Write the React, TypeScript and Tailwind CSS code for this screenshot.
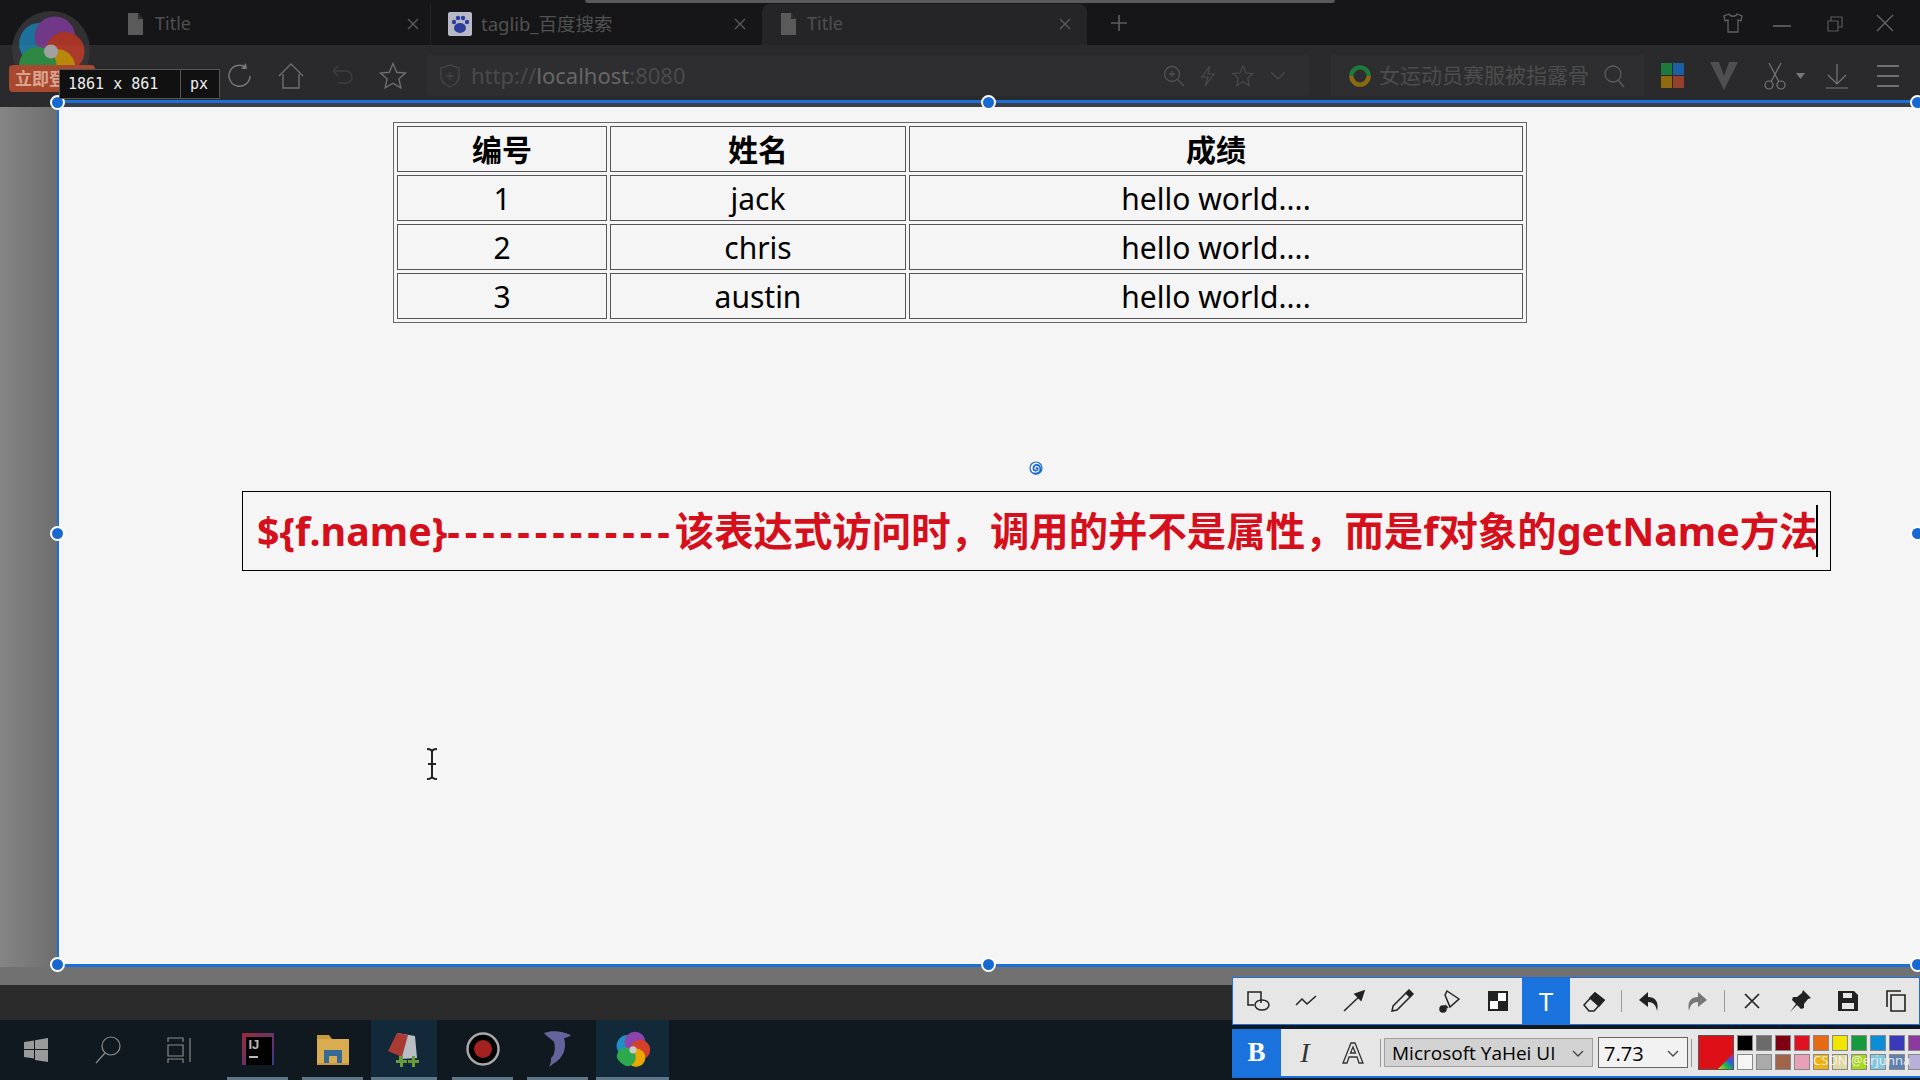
import React from "react";

const cjk = { fontFamily: '"Noto Sans","Noto Sans CJK SC",sans-serif' };

function Ic({ w = 24, h = 24, vb = "0 0 24 24", c = "#5e5e5e", sw = 1.5, children, className = "" }: any) {
  return (
    <svg width={w} height={h} viewBox={vb} fill="none" stroke={c} strokeWidth={sw} className={`shrink-0 ${className}`}>
      {children}
    </svg>
  );
}

function Logo({ size, dim = 1 }: { size: number; dim?: number }) {
  const id = `clip${size}`;
  const petals = [
    { c: "#1f8fc4", x: 36, y: 42, r: 27 },
    { c: "#8e44ad", x: 55, y: 33, r: 26 },
    { c: "#d6402a", x: 68, y: 52, r: 25 },
    { c: "#e8a800", x: 58, y: 72, r: 23 },
    { c: "#2da84a", x: 33, y: 70, r: 24 },
  ];
  return (
    <svg width={size} height={size} viewBox="0 0 100 100" style={{ opacity: dim }}>
      <clipPath id={id}>
        <circle cx="50" cy="50" r="46" />
      </clipPath>
      <circle cx="50" cy="50" r="50" fill="#3a3a3c" opacity={size > 50 ? 1 : 0} />
      <g clipPath={`url(#${id})`}>
        {petals.map((p) => (
          <circle key={p.c} cx={p.x} cy={p.y} r={p.r} fill={p.c} />
        ))}
      </g>
      <circle cx="50" cy="52" r="9" fill="#c9c9c9" />
    </svg>
  );
}

function DocIcon() {
  return (
    <svg width="17" height="24" viewBox="0 0 17 24" className="shrink-0">
      <path d="M1 1h10l5 6v16H1z" fill="#5a5a5a" />
      <path d="M11 1v6h5" fill="#2c2c2c" />
    </svg>
  );
}

function Close({ c = "#5e5e5e" }: { c?: string }) {
  return (
    <Ic w={12} h={12} vb="0 0 12 12" c={c} sw={1.2}>
      <path d="M1 1l10 10M11 1L1 11" />
    </Ic>
  );
}

function Tabs() {
  return (
    <div className="relative flex h-[45px] shrink-0 items-end bg-[#161618] pl-[127px]">
      <div className="absolute left-[585px] top-0 h-[3px] w-[750px] rounded-b bg-[#5a5a5a]" />
      <div className="flex h-[41px] w-[304px] items-center border-r border-[#222] pb-[2px]">
        <DocIcon />
        <span className="ml-[11px] text-[18px] text-[#4f4f4f]" style={cjk}>Title</span>
        <span className="ml-auto mr-[11px]"><Close /></span>
      </div>
      <div className="flex h-[41px] w-[331px] items-center pb-[2px] pl-[17px]">
        <svg width="24" height="24" viewBox="0 0 24 24" className="shrink-0">
          <rect width="24" height="24" rx="2" fill="#b7bac6" />
          <g fill="#2f3d9c">
            <ellipse cx="12" cy="16" rx="6" ry="5" />
            <circle cx="6" cy="10" r="2.2" />
            <circle cx="10" cy="6" r="2.2" />
            <circle cx="15" cy="6" r="2.2" />
            <circle cx="19" cy="10" r="2.2" />
          </g>
        </svg>
        <span className="ml-[9px] text-[18.500px] text-[#515151]" style={cjk}>taglib_百度搜索</span>
        <span className="ml-auto mr-[16px]"><Close /></span>
      </div>
      <div className="flex h-[41px] w-[325px] items-center rounded-t-lg bg-[#252527] pb-[2px] pl-[18px]">
        <DocIcon />
        <span className="ml-[10px] text-[18px] text-[#4f4f4f]" style={cjk}>Title</span>
        <span className="ml-auto mr-[16px]"><Close /></span>
      </div>
      <div className="ml-[23px] flex h-[41px] items-center pb-[4px]">
        <Ic w={18} h={18} vb="0 0 18 18" sw={1.6}><path d="M9 1v16M1 9h16" /></Ic>
      </div>
      <div className="ml-auto flex h-[45px] items-center pr-[26px]">
        <Ic w={22} h={22} vb="0 0 22 22" sw={1.3} c="#616161"><path d="M7 2L2 4l1 5 3-1v12h10V8l3 1 1-5-5-2c-1 3-7 3-8 0z" /></Ic>
        <div className="ml-[29px] mt-[6px] h-[2px] w-[18px] bg-[#555]" />
        <Ic w={16} h={16} vb="0 0 16 16" sw={1.2} c="#5a5a5a" className="ml-[36px] mt-[2px]"><path d="M1 5h10v10H1zM4 5V1h11v10h-4" /></Ic>
        <Ic w={18} h={18} vb="0 0 18 18" sw={1.3} c="#666" className="ml-[33px]"><path d="M1 1l16 16M17 1L1 17" /></Ic>
      </div>
    </div>
  );
}

function Toolbar() {
  return (
    <div className="flex h-[62px] shrink-0 bg-[#2a2a2c] pb-[7px] pl-[226px] pt-[10px]">
      <div className="flex h-[41px] items-center">
        <Ic w={28} h={28} vb="0 0 28 28" sw={1.4} c="#777"><path d="M24 14a10.500 10.500 0 1 1-4-8.500" /><path d="M20 1l1 6-6 0" fill="#777" stroke="none" /></Ic>
        <Ic w={28} h={28} vb="0 0 28 28" sw={1.4} c="#6f6f6f" className="ml-[23px]"><path d="M2 14L14 2l12 12M6 12v14h16V12" /></Ic>
        <Ic w={26} h={26} vb="0 0 26 26" sw={1.3} c="#3f3f3f" className="ml-[24px]"><path d="M5 8h12a6 6 0 0 1 0 12H9M9 3L4 8l5 5" /></Ic>
        <Ic w={30} h={30} vb="0 0 24 24" sw={1.1} c="#6f6f6f" className="ml-[23px]"><path d="M12 2l3 7 7 .6-5.300 4.700 1.600 7.200L12 17.800 5.700 21.500l1.600-7.200L2 9.600 9 9z" /></Ic>
      </div>
      <div className="ml-[18px] flex h-[41px] w-[884px] items-center rounded-sm bg-[#2e2e30] pl-[14px]">
        <Ic w={20} h={24} vb="0 0 20 24" sw={1.1} c="#4a4a4a"><path d="M10 1l9 3v8c0 5-4 9-9 11-5-2-9-6-9-11V4zM10 8v8M6 12h8" /></Ic>
        <span className="ml-[11px] text-[22px]" style={cjk}>
          <span className="text-[#4a4a4a]">http://</span><span className="text-[#666]">localhost</span><span className="text-[#4a4a4a]">:8080</span>
        </span>
        <div className="ml-auto flex items-center gap-[15px] pr-[24px]">
          <Ic w={22} h={22} vb="0 0 22 22" sw={1.4} c="#505050"><circle cx="9" cy="9" r="7.500" /><path d="M14.500 14.500L21 21M9 6v6M6 9h6" /></Ic>
          <Ic w={16} h={24} vb="0 0 16 24" sw={1.2} c="#4a4a4a"><path d="M10 2L2 13h6l-3 9 9-12H8z" /></Ic>
          <Ic w={24} h={24} vb="0 0 24 24" sw={1.2} c="#4a4a4a"><path d="M12 2l3 7 7 .6-5.300 4.700 1.600 7.200L12 17.800 5.700 21.500l1.600-7.200L2 9.600 9 9z" /></Ic>
          <Ic w={16} h={10} vb="0 0 16 10" sw={1.1} c="#4a4a4a"><path d="M1 1l7 7 7-7" /></Ic>
        </div>
      </div>
      <div className="ml-[21px] flex h-[41px] w-[313px] items-center bg-[#2e2e30] pl-[16px]">
        <svg width="26" height="26" viewBox="0 0 24 24" className="shrink-0">
          <path d="M4 12a8 8 0 0 1 16 0" fill="none" stroke="#1f7a3c" strokeWidth="4" />
          <path d="M20 12a8 8 0 0 1-16 0" fill="none" stroke="#8a6a10" strokeWidth="4" />
        </svg>
        <span className="ml-[6px] whitespace-nowrap text-[21px] text-[#4d4d4d]" style={cjk}>女运动员赛服被指露骨</span>
        <Ic w={22} h={24} vb="0 0 22 24" sw={1.3} c="#5d5d5d" className="ml-[14px]"><circle cx="10" cy="10" r="8" /><path d="M15 16l6 7" /></Ic>
      </div>
      <div className="flex h-[41px] items-center pl-[17px]">
        <div className="grid h-[25px] w-[23px] grid-cols-2 gap-[1px]">
          <div className="bg-[#1d7a3a]" /><div className="bg-[#1b5fa5]" />
          <div className="bg-[#8f6a10]" /><div className="bg-[#94402c]" />
        </div>
        <svg width="28" height="28" viewBox="0 0 28 28" className="ml-[26px]">
          <path d="M0 0h9l5 14 5-14h9L14 28z" fill="#4f4f4f" />
        </svg>
        <Ic w={24} h={28} vb="0 0 24 28" sw={1.2} c="#767676" className="ml-[25px]">
          <circle cx="6" cy="23" r="4" /><circle cx="18" cy="23" r="4" /><path d="M8 20L18 1M16 20L6 1" />
        </Ic>
        <svg width="9" height="6" viewBox="0 0 9 6" className="ml-[9px]"><path d="M0 0h9L4.500 6z" fill="#777" /></svg>
        <Ic w={24} h={26} vb="0 0 24 26" sw={1.2} c="#777" className="ml-[20px]"><path d="M12 1v19M3 12l9 9 9-9M1 25h22" /></Ic>
        <div className="ml-[28px] flex w-[22px] flex-col gap-[8px]">
          <div className="h-[2px] bg-[#6f6f6f]" /><div className="h-[2px] bg-[#6f6f6f]" /><div className="h-[2px] bg-[#6f6f6f]" />
        </div>
      </div>
    </div>
  );
}

const rows = [["1", "jack"], ["2", "chris"], ["3", "austin"]];

function DataTable() {
  const td = "border border-[#555] p-0 pt-[2px] text-center align-middle h-[46px]";
  return (
    <table className="ml-[334px] mt-[15px] w-[1134px] table-fixed border-separate border-spacing-[3px] border border-[#666] text-[30px] leading-none text-black" style={cjk}>
      <colgroup>
        <col className="w-[210px]" /><col className="w-[296px]" /><col />
      </colgroup>
      <thead>
        <tr>
          <th className={`${td} font-bold`}>编号</th>
          <th className={`${td} font-bold`}>姓名</th>
          <th className={`${td} font-bold`}>成绩</th>
        </tr>
      </thead>
      <tbody>
        {rows.map(([a, b]) => (
          <tr key={a}>
            <td className={td}>{a}</td>
            <td className={td}>{b}</td>
            <td className={td}>hello world....</td>
          </tr>
        ))}
      </tbody>
    </table>
  );
}

function Handle({ className }: { className: string }) {
  return <div className={`absolute h-[15px] w-[15px] rounded-full border-2 border-white bg-[#1769d2] ${className}`} />;
}

function Frame() {
  return (
    <div className="pointer-events-none absolute left-[57px] top-[100px] h-[867px] w-[1860px] border-b-[3px] border-l-[2px] border-t-[3px] border-[#1a6fd8]">
      <div className="h-[4px] bg-[#3a3f47]" />
      <Handle className="left-[-9px] top-[-8px]" />
      <Handle className="left-[922px] top-[-8px]" />
      <Handle className="right-[-8px] top-[-8px]" />
      <Handle className="left-[-9px] top-[423px]" />
      <Handle className="right-[-8px] top-[423px]" />
      <Handle className="left-[-9px] bottom-[-8px]" />
      <Handle className="left-[922px] bottom-[-8px]" />
      <Handle className="right-[-8px] bottom-[-8px]" />
    </div>
  );
}

const tool = "flex h-full w-[48px] shrink-0 items-center justify-center";

function ToolA() {
  const k = "#222";
  return (
    <div className="absolute bottom-[55px] left-[1232px] right-0 flex h-[48px] items-center border border-[#1a6fd8] bg-[#e6e6e6] pl-[1px]">
      <div className={tool}><Ic c={k} sw={1.5}><path d="M15 14V3H2v13h6" /><ellipse cx="16" cy="16" rx="7" ry="5" /></Ic></div>
      <div className={tool}><Ic c={k} sw={1.5}><path d="M2 16l6-6 5 5 9-8" /></Ic></div>
      <div className={tool}><Ic c={k} sw={1.5}><path d="M2 22L20 5" /><path d="M22 2l-9 3 6 6z" fill={k} /></Ic></div>
      <div className={tool}><Ic c={k} sw={1.5}><path d="M3 17L16 4l4 4L7 21l-5 1z" /><path d="M16 4l3-3 4 4-3 3" fill={k} /></Ic></div>
      <div className={tool}><Ic c={k} sw={1.5}><path d="M9 2l12 8-9 8-5-12zM7 16l3 3" /><circle cx="5" cy="20" r="3" fill={k} /></Ic></div>
      <div className={tool}>
        <div className="grid h-[20px] w-[20px] grid-cols-2 border-2 border-[#222] bg-white">
          <div className="bg-[#222]" /><div /><div /><div className="bg-[#222]" />
        </div>
      </div>
      <div className={`${tool} bg-[#1a73dc]`}>
        <span className="text-[26px] leading-none text-white" style={{ fontFamily: '"Noto Sans",sans-serif' }}>T</span>
      </div>
      <div className={tool}><Ic c={k} sw={1.5}><path d="M2 16L13 4l9 7-10 11H7z" /><path d="M13 4l9 7-5 6-9-8z" fill={k} /></Ic></div>
      <div className="ml-[3px] mr-[3px] h-[22px] w-[1px] shrink-0 bg-[#999]" />
      <div className={tool}><svg width="22" height="24" viewBox="0 0 22 24"><path d="M10 3L1 11l9 7v-5c5 0 8 3 9 9 2-8-1-14-9-14z" fill="#222" /></svg></div>
      <div className={tool}><svg width="22" height="24" viewBox="0 0 22 24"><path d="M12 3l9 8-9 7v-5c-5 0-8 3-9 9-2-8 1-14 9-14z" fill="#777" /></svg></div>
      <div className="ml-[3px] mr-[3px] h-[22px] w-[1px] shrink-0 bg-[#999]" />
      <div className={tool}><Ic w={16} h={16} vb="0 0 16 16" c={k} sw={1.7}><path d="M1 1l14 14M15 1L1 15" /></Ic></div>
      <div className={tool}><svg width="24" height="24" viewBox="0 0 24 24"><path d="M15 1l8 8-3 1-4 5 0 4-3 1-4-4-7 7 6-8-4-4 1-3h4l5-4z" fill="#222" /></svg></div>
      <div className={tool}>
        <svg width="20" height="20" viewBox="0 0 20 20"><path d="M0 0h16l4 4v16H0z" fill="#222" /><path d="M5 2h9v5H5zM4 12h12v6H4z" fill="#e6e6e6" /></svg>
      </div>
      <div className={tool}><Ic w={20} h={22} vb="0 0 20 22" c={k} sw={1.6}><path d="M5 5h14v16H5zM1 17V1h14" /></Ic></div>
    </div>
  );
}

const colors = [
  "#000000", "#6b6b6b", "#7e0012", "#e01221", "#e56a14", "#f2e600", "#159a3e", "#0a8ed8", "#3a3ab8", "#8c3a9e",
  "#f5f5f5", "#aaaaaa", "#a0644a", "#e8a0b8", "#f0b010", "#e0d8a0", "#a8d818", "#80c8e0", "#6080b0", "#b8b0d8",
];

function ToolB() {
  return (
    <div className="absolute bottom-[2px] left-[1232px] right-0 flex h-[49px] items-center overflow-hidden border-b-2 border-[#1a6fd8] bg-[#e6e6e6]">
      <div className={`${tool} w-[49px] bg-[#1a73dc]`}>
        <span className="text-[27px] font-bold leading-none text-white" style={{ fontFamily: '"Liberation Serif",serif' }}>B</span>
      </div>
      <div className={tool}>
        <span className="text-[28px] italic leading-none text-[#333]" style={{ fontFamily: '"Liberation Serif",serif' }}>I</span>
      </div>
      <div className={tool}>
        <Ic c="#333" sw={1.3}><path d="M2 22L10 2h4l8 20h-4l-2-6H8l-2 6zM9.500 12h5L12 6z" /></Ic>
      </div>
      <div className="ml-[3px] h-[28px] w-[1px] shrink-0 bg-[#999]" />
      <div className="ml-[3px] flex h-[29px] w-[209px] shrink-0 items-center border border-[#a0a0a0] bg-[#d2d2d2] pl-[7px] pr-[8px] pt-[2px]">
        <span className="whitespace-nowrap text-[19px] leading-none text-black" style={{ fontFamily: '"Open Sans",sans-serif' }}>Microsoft YaHei UI</span>
        <Ic w={12} h={8} vb="0 0 12 8" c="#444" sw={1.3} className="ml-auto"><path d="M1 1l5 5 5-5" /></Ic>
      </div>
      <div className="ml-[5px] flex h-[31px] w-[90px] shrink-0 items-center border border-[#666] bg-[#f2f2f2] pl-[5px] pr-[8px] pt-[2px]">
        <span className="text-[20px] leading-none text-black" style={{ fontFamily: '"Open Sans",sans-serif' }}>7.73</span>
        <Ic w={12} h={8} vb="0 0 12 8" c="#444" sw={1.3} className="ml-auto"><path d="M1 1l5 5 5-5" /></Ic>
      </div>
      <div className="ml-[3px] h-[28px] w-[1px] shrink-0 bg-[#999]" />
      <div className="relative ml-[6px] h-[35px] w-[36px] shrink-0 border border-[#555] bg-[#dd1018]">
        <svg width="15" height="15" viewBox="0 0 15 15" className="absolute bottom-0 right-0">
          <defs>
            <linearGradient id="rb" x1="0" y1="1" x2="1" y2="0">
              <stop offset="0" stopColor="#f5d020" /><stop offset=".35" stopColor="#20c040" /><stop offset=".65" stopColor="#2060e0" /><stop offset="1" stopColor="#d020c0" />
            </linearGradient>
          </defs>
          <path d="M15 0v15H0z" fill="url(#rb)" />
        </svg>
      </div>
      <div className="ml-[3px] grid shrink-0 grid-cols-[repeat(10,16px)] gap-[3px]">
        {colors.map((c, i) => (
          <div key={i} className="h-[16px] w-[16px] border border-[#888]" style={{ background: c }} />
        ))}
      </div>
      <span className="absolute left-[581px] top-[25px] whitespace-nowrap text-[13px] leading-none text-[#f4f4f4]/90" style={{ fontFamily: '"Noto Sans",sans-serif' }}>CSDN @erjunna</span>
    </div>
  );
}

function Taskbar() {
  const under = "border-b-[3px] border-[#5d7688]";
  return (
    <div className="flex h-[60px] shrink-0 items-stretch bg-[#10191f] pl-[24px]">
      <div className="flex w-[203px] items-center">
        <svg width="24" height="24" viewBox="0 0 24 24" className="shrink-0"><path d="M0 4l10-1.500V11H0zM11 2.300L24 0v11H11zM0 12h10v8.500L0 19zM11 12h13v12l-13-2z" fill="#9a9a9a" /></svg>
        <Ic w={26} h={28} vb="0 0 26 28" c="#8b8b8b" sw={1.2} className="ml-[47px]"><circle cx="16" cy="10" r="9" /><path d="M10 17L1 27" /></Ic>
        <Ic w={26} h={26} vb="0 0 26 26" c="#8b8b8b" sw={1.2} className="ml-[46px]"><path d="M1 5V1h15v4M1 8h15v11H1zM1 26v-4h15v4M23 1v24" /></Ic>
      </div>
      <div className={`flex w-[61px] items-center justify-center ${under}`}>
        <div className="relative h-[32px] w-[32px] bg-[linear-gradient(135deg,#9c2a3a,#3a3a90)]">
          <div className="absolute left-[4px] top-[4px] flex h-[28px] w-[26px] flex-col bg-black pl-[3px] text-[13px] font-bold leading-[16px] text-[#bbb]" style={{ fontFamily: '"Liberation Sans",sans-serif' }}>
            IJ
            <div className="mt-[3px] h-[2px] w-[9px] bg-[#bbb]" />
          </div>
        </div>
      </div>
      <div className={`ml-[14px] flex w-[61px] items-center justify-center ${under}`}>
        <svg width="32" height="32" viewBox="0 0 32 32"><path d="M0 2h12l3 4h17v26H0z" fill="#c99a3c" /><path d="M0 6h32v24H0z" fill="#d9ac52" /><path d="M7 30V17h18v13h-5v-7h-8v7z" fill="#356b96" /></svg>
      </div>
      <div className={`ml-[8px] flex w-[66px] items-center justify-center bg-[#12293a] ${under}`}>
        <svg width="34" height="38" viewBox="0 0 34 38"><path d="M10 3l18 3 2 22-16 1z" fill="#b9bdc4" /><path d="M10 3l11 2-6 22-14-6z" fill="#a83b34" /><path d="M12 26h4v4h4v3h-4v4h-3v-4H9v-3h3zM25 26h3v4h4v3h-4v4h-3v-4h-4v-3h4z" fill="#6a9a3a" /></svg>
      </div>
      <div className="ml-[15px] flex w-[61px] items-center justify-center border-b-[3px] border-[#5d7688]">
        <svg width="34" height="34" viewBox="0 0 34 34"><circle cx="17" cy="17" r="15.500" fill="#000" stroke="#a8a8a8" strokeWidth="2.500" /><circle cx="17" cy="17" r="9" fill="#a3211f" /></svg>
      </div>
      <div className={`ml-[14px] flex w-[61px] items-center justify-center ${under}`}>
        <svg width="30" height="38" viewBox="0 0 30 38"><path d="M1 3c8-3 18-2 27 2-2 2-5 3-7 3 3 9 0 20-11 26l-4 3c2-4 2-6 2-9 3-2 5-9 3-16C9 9 4 7 1 3z" fill="#66639c" /></svg>
      </div>
      <div className={`ml-[8px] flex w-[73px] items-center justify-center bg-[#12293a] ${under}`}>
        <Logo size={40} />
      </div>
    </div>
  );
}

export default function App() {
  return (
    <div className="relative flex h-[1080px] w-[1920px] flex-col overflow-hidden bg-[#2a2a2c]">
      <Tabs />
      <Toolbar />
      <div className="flex h-[860px] shrink-0">
        <div className="w-[57px] bg-[linear-gradient(90deg,#858585,#6e6e6e)]" />
        <div className="flex-1 bg-[#f5f5f5] pl-[2px]">
          <DataTable />
          <div className="relative ml-[183px] mt-[168px] flex h-[80px] w-[1589px] items-center border border-black pl-[14px] pt-[2px] text-[39.400px] font-bold leading-none text-[#d50f1b]" style={cjk}>
            <span className="whitespace-nowrap">
              {"${f.name}"}<span className="tracking-[4.900px]">-------------</span>该表达式访问时，调用的并不是属性，而是f对象的getName方法
            </span>
            <div className="absolute left-[1573px] top-[13px] h-[52px] w-[2px] bg-black" />
          </div>
        </div>
      </div>
      <div className="h-[18px] shrink-0 bg-[#717171]" />
      <div className="h-[35px] shrink-0 bg-[#2b2b2b]" />
      <Taskbar />

      <Frame />
      <div className="absolute left-[12px] top-[11px]"><Logo size={78} dim={0.75} /></div>
      <div className="absolute left-[9px] top-[65px] flex h-[27px] w-[86px] items-center overflow-hidden rounded-sm bg-[#a8492f] pl-[6px] text-[17px] font-bold whitespace-nowrap text-[#d9a58f]" style={cjk}>立即登录</div>
      <div className="absolute left-[59px] top-[69px] flex h-[30px] items-center border border-[#555] bg-[#111] text-[15px] text-[#eee]" style={{ fontFamily: '"DejaVu Sans Mono",monospace' }}>
        <span className="w-[120px] pl-[8px]">1861 x 861</span>
        <span className="w-[39px] border-l border-[#555] pl-[9px] leading-[28px]">px</span>
      </div>
      <svg width="14" height="14" viewBox="0 0 14 14" className="absolute left-[1029px] top-[461px]">
        <path d="M7 7.500c1-1 2 0 1.500 1.200-.8 1.500-3.500 1.300-4-.7C4 5.500 6 3.500 8.500 4c2.500.6 3.500 3.500 2.500 6-1 2.300-4 3.200-6.500 2.200" fill="none" stroke="#1769d2" strokeWidth="1.800" />
        <circle cx="7" cy="7" r="6" fill="none" stroke="#1769d2" strokeWidth="1.200" />
      </svg>
      <svg width="20" height="32" viewBox="0 0 20 32" className="absolute left-[422px] top-[748px]">
        <path d="M5 1c3 0 5 1 5 3v24c0 2-2 3-5 3M15 1c-3 0-5 1-5 3v24c0 2 2 3 5 3M6 16h8" fill="none" stroke="#222" strokeWidth="2" />
      </svg>
      <ToolA />
      <ToolB />
    </div>
  );
}
